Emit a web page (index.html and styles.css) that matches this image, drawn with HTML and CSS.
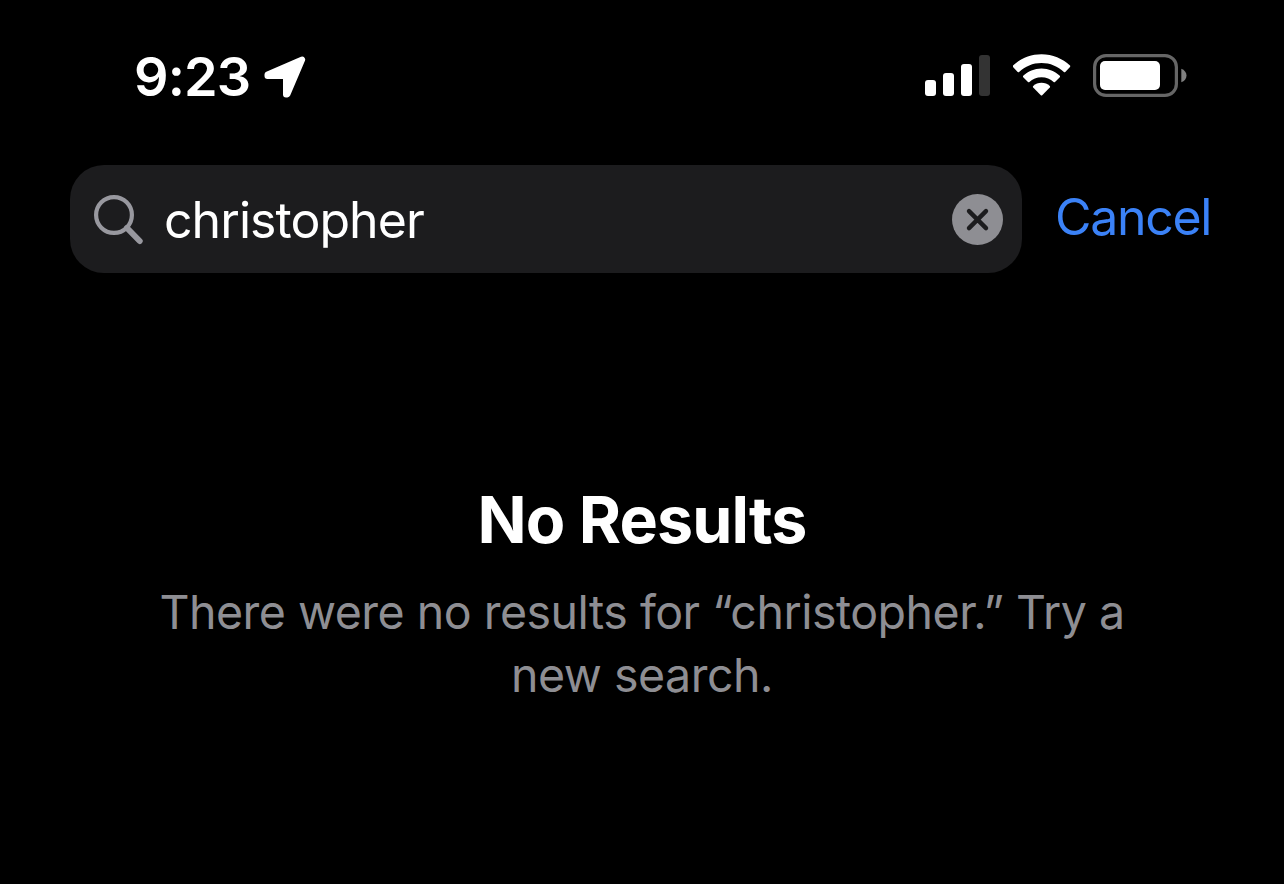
FILE: index.html
```html
<!DOCTYPE html>
<html lang="en">

<head>
    <meta charset="UTF-8">
    <meta name="viewport" content="width=device-width, initial-scale=1.0">
    <title>Search</title>

    <link rel="stylesheet" href="styles.css">
</head>

<body>

    <header class="status-bar">
        <div class="status-left">
            <span class="time">9:23</span>
            <svg class="location" width="42" height="42" viewBox="0 0 42 42">
                <path d="M3.5 18.6 L38.2 3.6 L23.4 38.4 L22 38.4 L22 20 L3.5 20 Z" />
            </svg>
        </div>
        <div class="status-right">
            <svg class="signal" width="66" height="43" viewBox="0 0 66 43">
                <rect x="0" y="26" width="11" height="16" rx="3" />
                <rect x="18" y="19" width="11" height="23" rx="3" />
                <rect x="36" y="10" width="11" height="32" rx="3" />
                <rect class="bar-off" x="54" y="1" width="11" height="41" rx="3" />
            </svg>
            <svg class="wifi" width="58" height="43" viewBox="0 0 58 43">
                <path d="M28.5 0.2 C39.5 0.2 49.6 4.5 57 11.6 Q57.5 12.3 57 13 L52.3 18 Q51.6 18.5 50.9 18 C45 12.4 37.2 9 28.5 9 C19.8 9 12 12.4 6.1 18 Q5.4 18.5 4.7 18 L0 13 Q-0.5 12.3 0 11.6 C7.4 4.5 17.5 0.2 28.5 0.2 Z" />
                <path d="M28.5 14.4 C35.6 14.4 42 17.2 46.8 21.8 Q47.4 22.5 46.8 23.2 L42 28 Q41.3 28.6 40.6 28 C37.4 25 33.2 23.3 28.5 23.3 C23.8 23.3 19.6 25 16.4 28 Q15.7 28.6 15 28 L10.2 23.2 Q9.6 22.5 10.2 21.8 C15 17.2 21.4 14.4 28.5 14.4 Z" />
                <path d="M28.5 28.7 C31.7 28.7 34.6 29.9 36.8 31.9 Q37.5 32.7 36.8 33.5 L29.2 41.3 Q28.5 41.9 27.8 41.3 L20.2 33.5 Q19.5 32.7 20.2 31.9 C22.4 29.9 25.3 28.7 28.5 28.7 Z" />
            </svg>
            <svg class="battery" width="94" height="43" viewBox="0 0 94 43">
                <rect class="battery-case" x="1.6" y="1.6" width="81.8" height="39.8" rx="11.4" />
                <rect x="7" y="7" width="60" height="29" rx="5" />
                <path class="battery-tip" d="M88.3 14.7 C91.4 15.8 93.5 18.4 93.5 21.5 C93.5 24.6 91.4 27.2 88.3 28.3 Z" />
            </svg>
        </div>
    </header>

    <form class="search">
        <div class="search-field">
            <svg class="search-icon" width="50" height="50" viewBox="0 0 50 50">
                <circle cx="20" cy="20" r="17.9" />
                <path d="M33 33 L45.7 46" />
            </svg>
            <input class="search-input" type="text" value="christopher" aria-label="Search">
            <button class="clear-btn" type="button" aria-label="Clear">
                <svg width="51" height="51" viewBox="0 0 51 51">
                    <circle cx="25.5" cy="25.5" r="25.5" />
                    <path d="M17 17.1 L34 34.1 M34 17.1 L17 34.1" />
                </svg>
            </button>
        </div>
        <button class="cancel-btn" type="button">Cancel</button>
    </form>

    <main class="results">
        <h1>No Results</h1>
        <p>There were no results for “christopher.” Try a new search.</p>
    </main>

</body>

</html>
```

FILE: styles.css
```css
* {
    box-sizing: border-box;
}

body {
    font-family: 'Inter', sans-serif;
    margin: 0;
    height: 100vh;
    background-color: black;
    color: white;
    overflow: hidden;
}

svg {
    display: block;
    fill: currentColor;
}

.status-bar {
    display: flex;
    justify-content: space-between;
    align-items: flex-start;
    height: 165px;
    padding: 45px 97px 0 134px;
}

.status-left {
    display: flex;
    align-items: center;
}

.time {
    width: 130px;
    font-size: 54px;
    font-weight: 600;
    line-height: 64px;
    letter-spacing: -0.9px;
}

.location {
    stroke: currentColor;
    stroke-width: 6;
    stroke-linejoin: round;
}

.status-right {
    display: flex;
    padding-top: 9px;
}

.bar-off {
    fill: #333333;
}

.wifi {
    margin: 0 22px;
}

.battery-case {
    fill: none;
    stroke: #666666;
    stroke-width: 3.2;
}

.battery-tip {
    fill: #808080;
}

.search {
    display: flex;
    align-items: center;
    padding: 0 70px;
}

.search-field {
    display: flex;
    flex-shrink: 0;
    align-items: center;
    width: 952px;
    height: 108px;
    padding: 0 19px 0 24px;
    background-color: #1c1c1e;
    border-radius: 34px;
}

.search-icon {
    margin-top: 2px;
    fill: none;
    stroke: #98989f;
    stroke-width: 4.2;
    stroke-linecap: round;
}

.search-icon path {
    stroke-width: 6;
}

.search-input {
    flex: 1;
    min-width: 0;
    height: 64px;
    margin: 2px 0 0;
    padding: 0 0 0 20px;
    background: none;
    border: none;
    outline: none;
    color: white;
    font-family: inherit;
    font-size: 50px;
    letter-spacing: -0.95px;
}

.clear-btn,
.cancel-btn {
    padding: 0;
    background: none;
    border: none;
    cursor: pointer;
}

.clear-btn {
    color: #8e8e93;
}

.clear-btn path {
    stroke: #1c1c1e;
    stroke-width: 4.4;
    stroke-linecap: round;
}

.cancel-btn {
    margin: -4px 0 0 33px;
    color: #3b82f7;
    font-family: inherit;
    font-size: 50px;
    line-height: 64px;
    letter-spacing: -1.3px;
}

.results {
    padding: 208px 140px 0;
    text-align: center;
}

h1 {
    margin: 0;
    font-size: 64.5px;
    font-weight: 700;
    line-height: 78px;
    letter-spacing: -0.9px;
}

p {
    margin: 22px 0 0;
    color: #8e8e93;
    font-size: 46.5px;
    line-height: 63px;
    letter-spacing: -0.5px;
}
```
